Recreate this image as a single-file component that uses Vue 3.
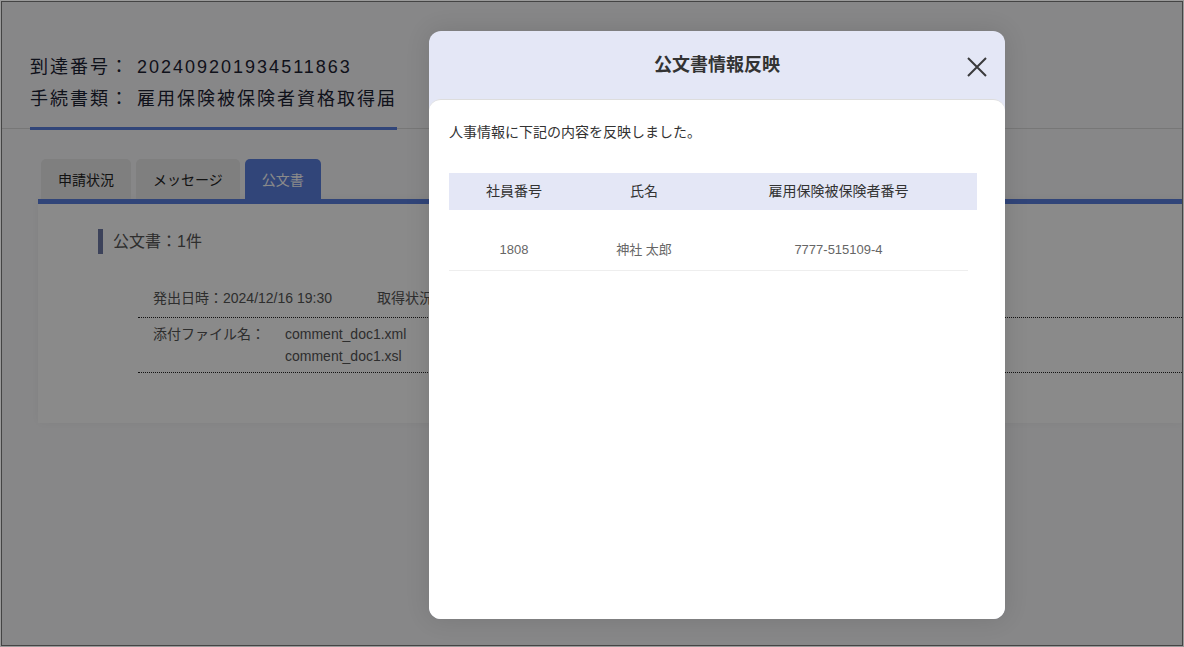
<template>
  <div class="page">
    <div class="content">
      <div class="summary">
        <p class="summary-line"><span class="summary-label">到達番号：</span>202409201934511863</p>
        <p class="summary-line"><span class="summary-label">手続書類：</span>雇用保険被保険者資格取得届</p>
      </div>
      <div class="rule"><div class="rule-accent"></div></div>

      <ul class="tabs">
        <li v-for="tab in tabs" :key="tab" class="tab" :class="{ active: tab === activeTab }">{{ tab }}</li>
      </ul>

      <section class="panel">
        <h2 class="panel-title">公文書：1件</h2>
        <div class="doc">
          <div class="doc-meta">
            <span class="doc-date">発出日時：2024/12/16 19:30</span>
            <span>取得状況：取得済み</span>
          </div>
          <div class="doc-files">
            <span class="doc-files-label">添付ファイル名：</span>
            <div class="doc-files-list">
              <div v-for="file in files" :key="file">{{ file }}</div>
            </div>
          </div>
        </div>
      </section>
    </div>

    <div class="overlay">
      <div class="modal">
        <header class="modal-head">
          <h1 class="modal-title">公文書情報反映</h1>
          <button class="modal-close" aria-label="閉じる">
            <svg width="22" height="22" viewBox="0 0 22 22">
              <path d="M2 2 L20 20 M20 2 L2 20" stroke="#3a3a3c" stroke-width="2" fill="none" />
            </svg>
          </button>
        </header>
        <div class="modal-body">
          <p class="modal-message">人事情報に下記の内容を反映しました。</p>
          <div class="table-head">
            <div class="table-row">
              <div>社員番号</div>
              <div>氏名</div>
              <div>雇用保険被保険者番号</div>
            </div>
          </div>
          <div v-for="row in rows" :key="row.id" class="table-row table-data">
            <div>{{ row.id }}</div>
            <div>{{ row.name }}</div>
            <div>{{ row.insurance }}</div>
          </div>
        </div>
      </div>
    </div>

    <div class="frame"></div>
  </div>
</template>

<script setup>
import { ref } from 'vue'

const tabs = ['申請状況', 'メッセージ', '公文書']
const activeTab = ref('公文書')
const files = ['comment_doc1.xml', 'comment_doc1.xsl']
const rows = [
  { id: '1808', name: '神社 太郎', insurance: '7777-515109-4' }
]
</script>

<style>
html, body {
  margin: 0;
  background: #fff;
}
</style>

<style scoped>
.page {
  position: relative;
  box-sizing: border-box;
  width: 1184px;
  height: 647px;
  overflow: hidden;
  font-family: "Liberation Sans", "Noto Sans CJK JP", sans-serif;
  color: #333;
  background: #fafafc;
}

.content {
  padding-top: 53px;
}

.summary {
  padding-left: 30px;
}

.summary-line {
  margin: 0;
  height: 32px;
  line-height: 28px;
  font-size: 18px;
  letter-spacing: 2px;
  color: #1d2233;
}

.summary-label {
  display: inline-block;
  width: 107px;
}

.rule {
  margin-top: 11px;
  height: 1px;
  background: #ddd;
  position: relative;
}

.rule-accent {
  position: absolute;
  left: 30px;
  top: -1px;
  width: 367px;
  height: 3px;
  background: #5b80e0;
}

.tabs {
  list-style: none;
  margin: 30px 0 0;
  padding: 0 0 0 41px;
  display: flex;
  gap: 5px;
}

.tab {
  height: 40px;
  line-height: 42px;
  padding: 0 17px;
  font-size: 14px;
  color: #222;
  background: #eaeaea;
  border-radius: 5px 5px 0 0;
}

.tab.active {
  background: #5b80e0;
  color: #fff;
}

.panel {
  box-sizing: border-box;
  margin-left: 38px;
  height: 224px;
  border-top: 5px solid #5b80e0;
  background: #fff;
  box-shadow: 0 0 10px rgba(0, 0, 0, 0.05);
  padding: 25px 0 0 60px;
}

.panel-title {
  margin: 0;
  height: 25px;
  line-height: 25px;
  border-left: 5px solid #6f7aa6;
  padding-left: 10px;
  font-size: 16px;
  font-weight: normal;
  color: #555;
}

.doc {
  margin: 32px 0 0 40px;
  font-size: 14px;
  color: #555;
}

.doc-meta {
  display: flex;
  gap: 45px;
  height: 31px;
  padding-left: 15px;
  border-bottom: 1px dotted #222;
  line-height: 24px;
}

.doc-files {
  display: flex;
  padding: 5px 0 5px 15px;
  border-bottom: 1px dotted #222;
  line-height: 22px;
}

.doc-files-label {
  width: 132px;
}

.overlay {
  position: absolute;
  inset: 0;
  background: rgba(0, 0, 0, 0.46);
}

.modal {
  position: absolute;
  left: 429px;
  top: 31px;
  width: 576px;
  height: 588px;
  display: flex;
  flex-direction: column;
  border-radius: 12px;
  background: #e4e7f6;
  box-shadow: 0 0 24px rgba(0, 0, 0, 0.12);
}

.modal-head {
  position: relative;
  flex: none;
  height: 68px;
}

.modal-title {
  margin: 0;
  text-align: center;
  line-height: 68px;
  font-size: 18px;
  font-weight: bold;
  color: #333;
}

.modal-close {
  position: absolute;
  right: 17px;
  top: 25px;
  width: 22px;
  height: 22px;
  padding: 0;
  border: 0;
  background: none;
}

.modal-body {
  flex: 1;
  box-sizing: border-box;
  padding: 22px 28px 0 20px;
  background: #fff;
  border-top: 1px solid #ddd;
  border-radius: 12px;
}

.modal-message {
  margin: 0 0 31px;
  height: 20px;
  line-height: 20px;
  font-size: 14px;
  color: #333;
}

.table-head {
  height: 37px;
  line-height: 36px;
  background: #e4e7f6;
  font-size: 14px;
  color: #333;
}

.table-row {
  display: grid;
  grid-template-columns: 130px 130px 259px;
  text-align: center;
}

.table-data {
  box-sizing: border-box;
  width: 519px;
  margin-top: 19px;
  height: 42px;
  line-height: 41px;
  font-size: 13px;
  color: #666;
  border-bottom: 1px solid #eee;
}

.frame {
  position: absolute;
  inset: 0;
  pointer-events: none;
  box-shadow: inset 0 0 0 1px #9a9a9a, inset 0 0 0 2px #444;
}
</style>
